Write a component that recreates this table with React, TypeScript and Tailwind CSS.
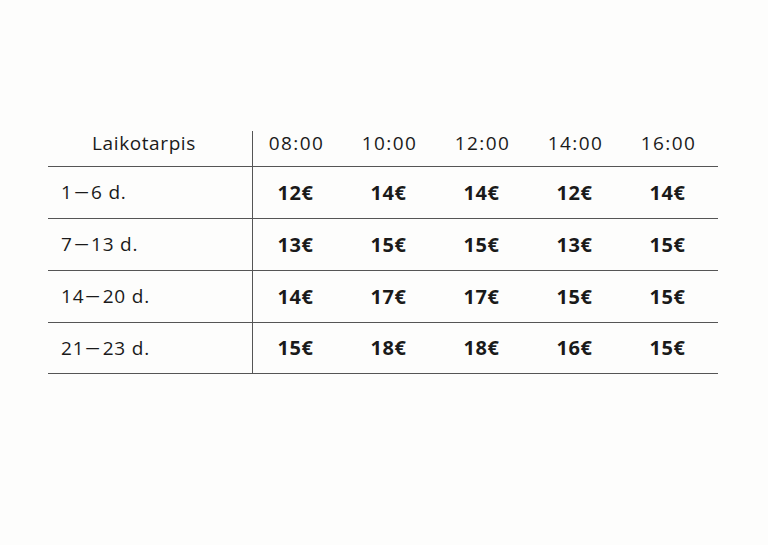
import React from 'react';

const times = ['08:00', '10:00', '12:00', '14:00', '16:00'];

const rows = [
  { from: '1', to: '6', prices: [12, 14, 14, 12, 14] },
  { from: '7', to: '13', prices: [13, 15, 15, 13, 15] },
  { from: '14', to: '20', prices: [14, 17, 17, 15, 15] },
  { from: '21', to: '23', prices: [15, 18, 18, 16, 15] },
];

export default function App() {
  return (
    <div className="w-[768px] h-[545px] bg-[#fdfdfc] pt-[131px] pl-[48px] text-[#1a1a1a] [font-family:'Open_Sans','Liberation_Sans',sans-serif]">
      <div className="w-[670px]">
        <div className="grid grid-cols-[205px_repeat(5,93px)] h-[36px] border-b border-[#555]">
          <div className="border-r border-[#555] flex justify-center pr-[12px] pt-[1px] text-[19px] leading-[22px] tracking-[0.6px]">
            Laikotarpis
          </div>
          {times.map((t) => (
            <div key={t} className="flex justify-center pr-[6px] pt-[1px] text-[19px] leading-[22px] tracking-[1.4px]">
              {t}
            </div>
          ))}
        </div>
        {rows.map((r, i) => (
          <div
            key={r.from}
            className={`grid grid-cols-[205px_repeat(5,93px)] border-b border-[#555] ${i === 3 ? 'h-[51px]' : 'h-[52px]'}`}
          >
            <div className="border-r border-[#555] flex items-center pl-[13px] text-[19px] tracking-[0.8px]">
              {r.from}
              <span className="inline-block scale-x-[1.6] mx-[4px] -translate-y-[1px]">–</span>
              {r.to} d.
            </div>
            {r.prices.map((p, j) => (
              <div key={j} className="flex items-center justify-center pr-[8px] text-[20px] font-bold tracking-[0.6px]">
                {p}€
              </div>
            ))}
          </div>
        ))}
      </div>
    </div>
  );
}
